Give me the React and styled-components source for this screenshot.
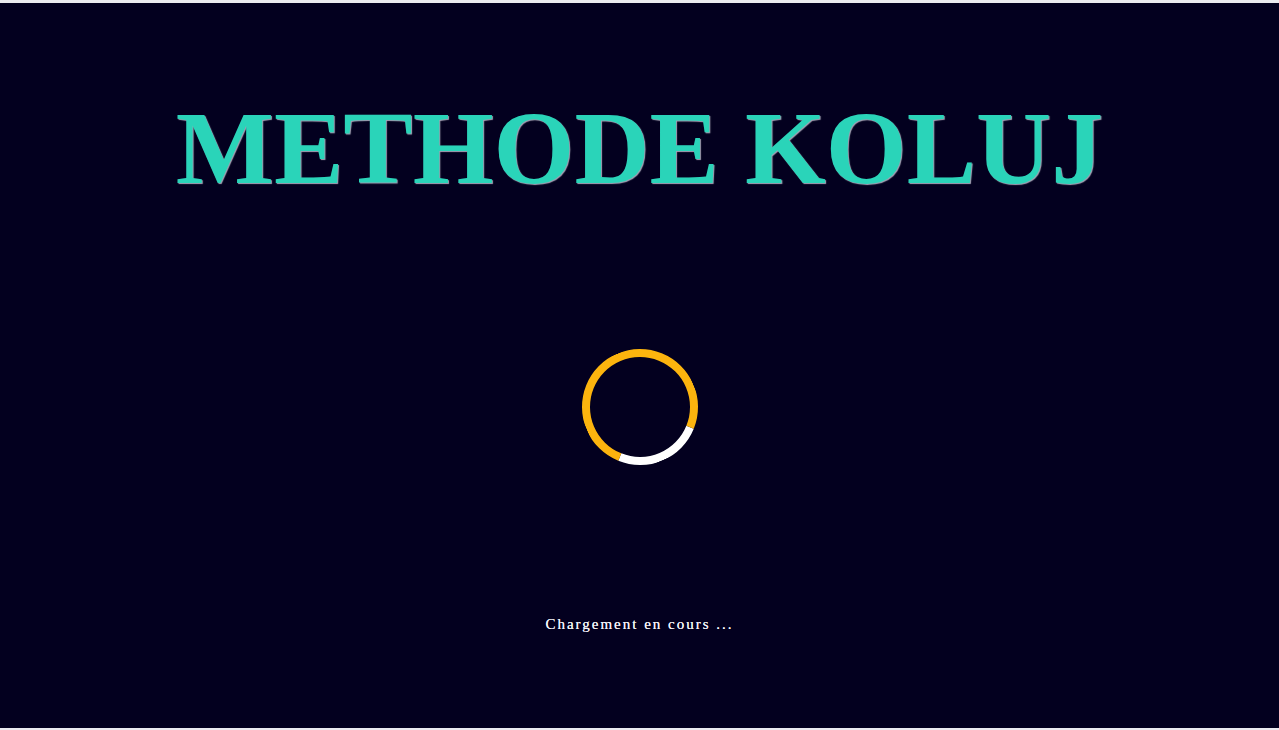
import React from 'react';
import styled, {createGlobalStyle} from 'styled-components';

const GlobalStyle = createGlobalStyle`
  html, body {
    margin: 0;
    padding: 0;
    background: #ebebf0;
  }
  #root {
    padding: 3px 0 2px 0;
  }
`;

const Screen = styled.main`
  height: 725px;
  background: #03001f;
  display: flex;
  flex-direction: column;
  align-items: center;
  overflow: hidden;
`;

const Title = styled.h1`
  margin: 93px 0 0 0;
  font-family: "Liberation Serif", "Times New Roman", serif;
  font-weight: 700;
  font-size: 104px;
  line-height: 1;
  color: #2ad4b9;
  text-shadow: 1px 1px 1px rgba(220, 220, 235, 0.75);
  white-space: nowrap;
`;

const Spinner = styled.div`
  margin-top: 149px;
  width: 116px;
  height: 116px;
  box-sizing: border-box;
  border-radius: 50%;
  border: 8px solid #fcb40e;
  border-bottom-color: #ffffff;
  transform: rotate(-23deg);
`;

const Status = styled.p`
  margin: 152px 0 0 0;
  font-family: "Liberation Serif", "Times New Roman", serif;
  font-size: 15px;
  line-height: 1;
  letter-spacing: 2px;
  color: #f4f4f8;
  text-shadow: 0 0 0.4px #f4f4f8;
`;

export default function App() {
    return (
        <>
            <GlobalStyle/>
            <Screen>
                <Title>METHODE KOLUJ</Title>
                <Spinner/>
                <Status>Chargement en cours ...</Status>
            </Screen>
        </>
    );
}
